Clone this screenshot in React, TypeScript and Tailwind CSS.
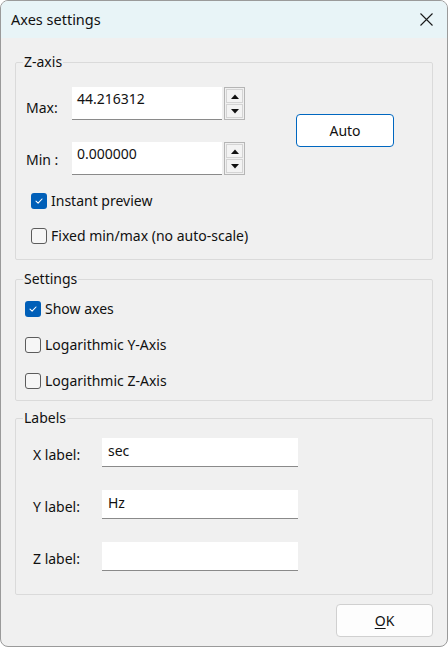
const font = "font-['Noto_Sans','Liberation_Sans',sans-serif]";

function Check({ checked }: { checked?: boolean }) {
  if (checked) {
    return (
      <span className="flex h-4 w-4 shrink-0 items-center justify-center rounded-[3px] bg-[#005fb8]">
        <svg width="10" height="10" viewBox="0 0 10 10" fill="none">
          <path d="M2 5.2 L4.1 7.2 L8 3" stroke="white" strokeWidth="1.1" strokeLinecap="round" strokeLinejoin="round" />
        </svg>
      </span>
    );
  }
  return <span className="h-4 w-4 shrink-0 rounded-[3px] border border-[#5c5c5c] bg-[#f6f6f6]" />;
}

function CheckRow({ label, checked }: { label: string; checked?: boolean }) {
  return (
    <label className="flex h-4 items-center gap-[4px] leading-[16px]">
      <Check checked={checked} />
      <span>{label}</span>
    </label>
  );
}

function Spin() {
  return (
    <div className="flex h-[33px] w-[21px] flex-col gap-[1px] border border-[#b5b5b5] bg-[#f0f0f0] p-[1px]">
      <button className="flex flex-1 items-center justify-center border border-[#d4d4d4] bg-[#f3f3f3]">
        <svg width="8" height="5" viewBox="0 0 8 5"><path d="M0 5 L4 0.5 L8 5 Z" fill="#111" /></svg>
      </button>
      <button className="flex flex-1 items-center justify-center border border-[#d4d4d4] bg-[#f3f3f3]">
        <svg width="8" height="5" viewBox="0 0 8 5"><path d="M0 0 L8 0 L4 4.5 Z" fill="#111" /></svg>
      </button>
    </div>
  );
}

function NumRow({ label, value, pt }: { label: string; value: string; pt: string }) {
  return (
    <div className="flex h-[33px] items-center leading-[20px]">
      <span className={`w-[46px] ${pt}`}>{label}</span>
      <div className="h-[33px] w-[150px] border-b border-[#8a8a8a] bg-white pl-[5px] pt-[1px] leading-[22px]">{value}</div>
      <div className="ml-[2px]">
        <Spin />
      </div>
    </div>
  );
}

function Group({ title, className, children }: { title: string; className: string; children: React.ReactNode }) {
  return (
    <fieldset className={`rounded-[2px] border border-[#dadada] ${className}`}>
      <legend className="ml-[7px] px-[1px] leading-[20px]">{title}</legend>
      {children}
    </fieldset>
  );
}

function TextRow({ label, value }: { label: string; value: string }) {
  return (
    <div className="flex h-[29px] items-center leading-[20px]">
      <span className="w-[69px] pt-[4px]">{label}</span>
      <div className="h-[29px] w-[196px] border-b border-[#8a8a8a] bg-white pl-[6px] leading-[26px]">{value}</div>
    </div>
  );
}

export default function App() {
  return (
    <div className={`${font} flex h-[647px] w-[448px] flex-col overflow-hidden rounded-[8px] border border-[#9a9a9a] bg-[#f0f0f0] text-[14px] text-[#111]`}>
      <div className="flex h-[37px] shrink-0 items-center justify-between bg-[#e8f4f7] pl-[10px] pr-[14px]">
        <span className="text-[14.5px]">Axes settings</span>
        <svg width="13" height="13" viewBox="0 0 13 13">
          <path d="M0.5 0.5 L12.5 12.5 M12.5 0.5 L0.5 12.5" stroke="#1a1a1a" strokeWidth="1.1" />
        </svg>
      </div>

      <div className="flex flex-1 flex-col px-[14px]">
        <Group title="Z-axis" className="mt-[14px]">
          <div className="px-[10px] pb-[15px]">
            <div className="mt-[15px] flex items-start">
              <div className="flex flex-col gap-[22px]">
                <NumRow label="Max:" value="44.216312" pt="pt-[9px]" />
                <NumRow label="Min :" value="0.000000" pt="pt-[3px]" />
              </div>
              <button className="ml-[51px] mt-[27px] h-[33px] w-[98px] rounded-[4px] border border-[#0067c0] bg-white text-center">
                Auto
              </button>
            </div>
            <div className="mt-[18px] flex flex-col gap-[19px] pl-[5px]">
              <CheckRow label="Instant preview" checked />
              <CheckRow label="Fixed min/max (no auto-scale)" />
            </div>
          </div>
        </Group>

        <Group title="Settings" className="mt-[9px]">
          <div className="mt-[12px] flex flex-col gap-[20px] pb-[11px] pl-[9px] pr-[10px]">
            <CheckRow label="Show axes" checked />
            <CheckRow label="Logarithmic Y-Axis" />
            <CheckRow label="Logarithmic Z-Axis" />
          </div>
        </Group>

        <Group title="Labels" className="mt-[7px]">
          <div className="mt-[10px] flex flex-col gap-[23px] pb-[23px] pl-[17px] pr-[10px]">
            <TextRow label="X label:" value="sec" />
            <TextRow label="Y label:" value="Hz" />
            <TextRow label="Z label:" value="" />
          </div>
        </Group>

        <div className="mt-[9px] flex justify-end">
          <button className="h-[33px] w-[97px] rounded-[4px] border border-[#d0d0d0] bg-[#fdfdfd]">
            <span className="underline underline-offset-2">O</span>K
          </button>
        </div>
      </div>
    </div>
  );
}
